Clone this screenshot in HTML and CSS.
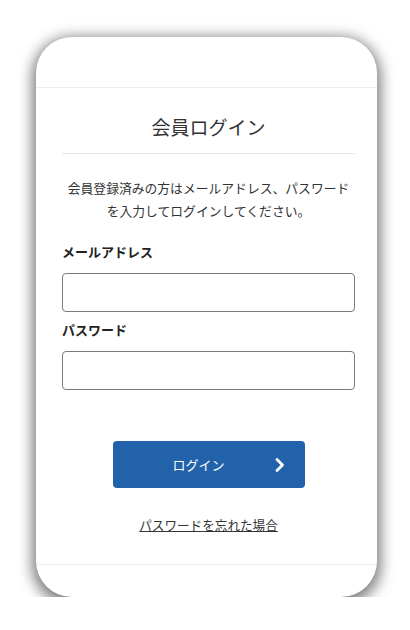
FILE: index.html
```html
<!DOCTYPE html>
<html lang="ja">
<head>
<meta charset="utf-8">
<link rel="stylesheet" href="styles.css">
</head>
<body>
<div class="card">
  <div class="card-top"></div>
  <main class="card-main">
    <h1 class="title">会員ログイン</h1>
    <p class="desc">会員登録済みの方はメールアドレス、パスワード<br>を入力してログインしてください。</p>
    <div class="field">
      <label class="label">メールアドレス</label>
      <input class="input" type="text">
    </div>
    <div class="field field-2">
      <label class="label">パスワード</label>
      <input class="input" type="password">
    </div>
    <div class="btn-wrap">
      <button class="btn"><span class="btn-text">ログイン</span>
        <svg class="chev" width="12" height="16" viewBox="0 0 12 16"><path d="M3 2.5 L8.5 8 L3 13.5" fill="none" stroke="#fff" stroke-width="2.8" stroke-linecap="round" stroke-linejoin="round"/></svg>
      </button>
    </div>
    <div class="link-wrap"><a class="link" href="#">パスワードを忘れた場合</a></div>
  </main>
  <div class="card-bottom"></div>
</div>
</body>
</html>
```
FILE: styles.css
```css
html, body {
  margin: 0;
  padding: 0;
  background: #fff;
}
body {
  font-family: "Noto Sans CJK JP", "Noto Sans", sans-serif;
  color: #333;
  padding: 37px 0 0 36px;
}
.card {
  width: 341px;
  height: 560px;
  background: #fff;
  border-radius: 36px;
  box-shadow: 0 4px 14px 4px rgba(0,0,0,0.5);
  display: flex;
  flex-direction: column;
  overflow: hidden;
}
.card-top {
  height: 50px;
  border-bottom: 1px solid #eeeeee;
  flex: none;
}
.card-main {
  flex: 1;
  padding: 25px 22px 0 26px;
  border-bottom: 1px solid #eeeeee;
}
.card-bottom {
  height: 32px;
  flex: none;
}
.title {
  margin: 0;
  font-size: 19px;
  font-weight: 400;
  line-height: 28px;
  text-align: center;
  color: #333;
  padding-bottom: 12px;
  border-bottom: 1px solid #e8e8e8;
}
.desc {
  margin: 22px 0 0;
  font-size: 12.8px;
  line-height: 23px;
  text-align: center;
  color: #333;
}
.field {
  margin-top: 20px;
  display: flex;
  flex-direction: column;
}
.field-2 {
  margin-top: 8px;
}
.label {
  font-size: 13px;
  font-weight: 700;
  line-height: 20px;
  color: #222;
  margin-bottom: 11px;
}
.input {
  box-sizing: border-box;
  height: 39px;
  width: 100%;
  border: 1px solid #7a7a7a;
  border-radius: 4px;
  margin: 0;
  padding: 0 8px;
  background: #fff;
}
.btn-wrap {
  margin-top: 51px;
  display: flex;
  justify-content: center;
}
.btn {
  width: 192px;
  height: 47px;
  background: #2162aa;
  border: none;
  border-radius: 4px;
  color: #fff;
  font-family: inherit;
  font-size: 13px;
  display: flex;
  align-items: center;
  padding: 0 19px 0 60px;
}
.btn-text {
  flex: 1;
  text-align: left;
}
.chev {
  display: block;
}
.link-wrap {
  margin-top: 25px;
  text-align: center;
  line-height: 20px;
}
.link {
  font-size: 12.6px;
  color: #333;
  text-decoration: underline;
}
```
